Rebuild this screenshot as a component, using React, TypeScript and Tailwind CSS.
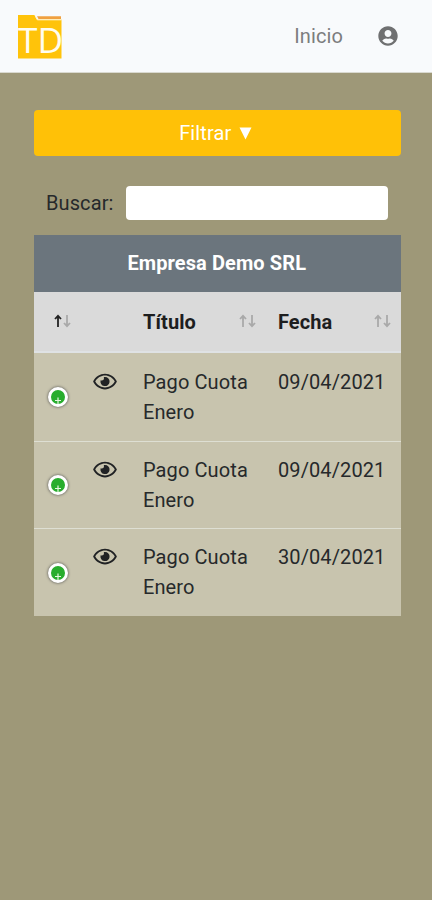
import React from "react";
import { FaRegEye, FaUserCircle } from "react-icons/fa";

const rows = [
  { title: "Pago Cuota Enero", date: "09/04/2021" },
  { title: "Pago Cuota Enero", date: "09/04/2021" },
  { title: "Pago Cuota Enero", date: "30/04/2021" },
];

const columns = "grid grid-cols-[47px_50px_135px_1fr]";

function Logo() {
  return (
    <svg width="48" height="44" viewBox="0 0 48 44" className="mt-[2px] overflow-visible" role="img">
      <path d="M0 0H16.5L19 4.5H43.5V43.5H0Z" fill="#ffc30a" />
      <path d="M19 1.2H43V4H20.5Z" fill="#f0a040" />
      <path d="M17 0.5L19.3 4.8H43.5" stroke="#fff3d0" strokeWidth="1" fill="none" />
      <text
        x="0"
        y="38"
        fill="#fffdf0"
        fontFamily="'Open Sans', sans-serif"
        fontSize="35"
        letterSpacing="0"
        textLength="45"
        lengthAdjust="spacingAndGlyphs"
      >
        TD
      </text>
    </svg>
  );
}

function SortArrows({ active = false }: { active?: boolean }) {
  return (
    <svg width="17" height="14" viewBox="0 0 17 14" fill="none" strokeWidth="1.8">
      <path d="M4 13V2M1 5L4 1.8L7 5" stroke={active ? "#222" : "#a9a9a9"} />
      <path d="M13 1V12M10 9L13 12.2L16 9" stroke="#a9a9a9" />
    </svg>
  );
}

function ExpandButton() {
  return (
    <button className="flex h-5 w-5 items-center justify-center rounded-full border-[3px] border-white bg-[#28ad2d] shadow-[0_0_3px_#444]">
      <svg width="14" height="14" viewBox="0 0 14 14" stroke="#e5f7df" strokeWidth="1.2">
        <path d="M7 7.5V14M4 10.5H10" />
      </svg>
    </button>
  );
}

export default function App() {
  return (
    <div className="h-[900px] w-[432px] overflow-hidden bg-[#9e9878] font-['Roboto',sans-serif] text-[20px] leading-[30px] tracking-[0.1px] text-[#26292b]">
      <header className="flex h-[73px] items-center border-b border-[#d9d9d0] bg-[#f8fafc] pr-[34px] pl-[18px]">
        <Logo />
        <span className="ml-auto text-[#7c7d7e]">Inicio</span>
        <FaUserCircle className="ml-[35px] size-5 text-[#6f7071]" />
      </header>

      <main className="pt-[37px] pr-[31.5px] pl-[34px]">
        <button className="flex h-[46px] w-full items-center justify-center gap-[8px] rounded-[4px] bg-[#ffc107] pr-[3px] text-white">
          <span>Filtrar</span>
          <svg width="13" height="13" viewBox="0 0 13 13" fill="currentColor">
            <path d="M0.5 0.5H12.5L6.5 12.5Z" />
          </svg>
        </button>

        <label className="mt-[29px] flex h-[36px] items-center pl-3">
          <span className="w-[80px]">Buscar:</span>
          <input className="h-[34px] w-[262px] rounded-[4px] bg-white px-3 outline-none" />
        </label>

        <section className="mt-[14px]">
          <h1 className="flex h-[57px] items-center justify-center bg-[#6b757d] pr-[1px] pb-[2px] font-bold text-white">
            Empresa Demo SRL
          </h1>
          <div className={`${columns} h-[61px] items-center border-b-2 border-[#dfe2e4] bg-[#dadada] font-bold text-[#1d1e1f]`}>
            <div className="pb-[2px] pl-5"><SortArrows active /></div>
            <div />
            <div className="flex items-center justify-between pr-[10px] pl-3">
              <span>Título</span><div className="pb-[2px]"><SortArrows /></div>
            </div>
            <div className="flex items-center justify-between pr-[10px] pl-3">
              <span>Fecha</span><div className="pb-[2px]"><SortArrows /></div>
            </div>
          </div>
          {rows.map((row, index) => (
            <div
              key={index}
              className={`${columns} h-[87.5px] bg-[#c8c4ae] ${index > 0 ? "border-t border-[#dedfd3]" : ""}`}
            >
              <div className="flex items-center pt-[1px] pl-[14px]"><ExpandButton /></div>
              <div className={index > 0 ? "pt-[17px] pl-3" : "pt-[18px] pl-3"}><FaRegEye className="h-[21px] w-[24px] text-[#202224]" /></div>
              <div className={index > 0 ? "pt-[13px] pr-3 pl-3" : "pt-[14px] pr-3 pl-3"}>{row.title}</div>
              <div className={index > 0 ? "pt-[13px] pl-3" : "pt-[14px] pl-3"}>{row.date}</div>
            </div>
          ))}
        </section>
      </main>
    </div>
  );
}
